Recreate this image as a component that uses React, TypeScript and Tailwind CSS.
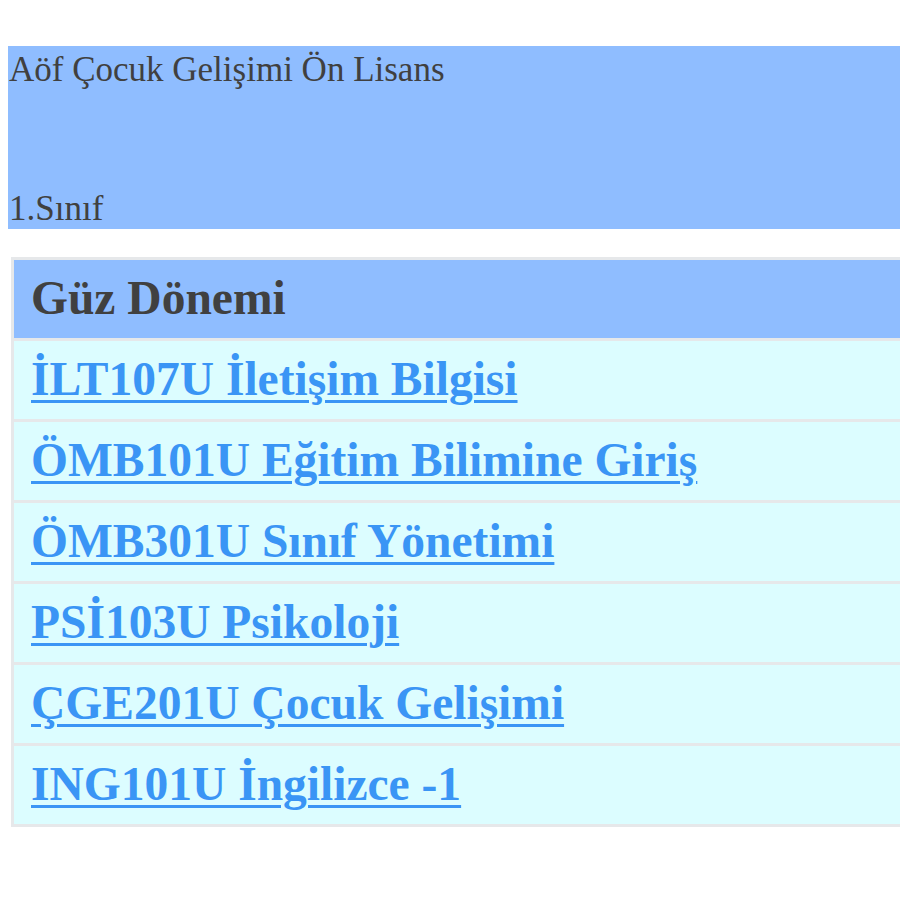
const COURSES = [
  "İLT107U İletişim Bilgisi",
  "ÖMB101U Eğitim Bilimine Giriş",
  "ÖMB301U Sınıf Yönetimi",
  "PSİ103U Psikoloji",
  "ÇGE201U Çocuk Gelişimi",
  "ING101U İngilizce -1",
];

export default function App() {
  return (
    <div className="w-[900px] h-[900px] overflow-hidden bg-white font-['Liberation_Serif',serif]">
      <div className="w-[1100px] pt-[46px] pl-[8px]">
        {/* Program banner */}
        <div className="h-[183px] flex flex-col justify-between bg-[#8fbdff] text-[#404040] text-[35px] leading-[40px]">
          <div className="pl-[1px] pt-[4px]">Aöf Çocuk Gelişimi Ön Lisans</div>
          <div className="pl-[1px]">1.Sınıf</div>
        </div>

        {/* Semester table */}
        <div className="mt-[28px] ml-[3px] flex flex-col gap-[3px] bg-[#e6e8ea] p-[3px]">
          <div className="h-[78px] flex items-center px-[17px] bg-[#8fbdff] text-[#404040] text-[47.5px] font-bold">
            Güz Dönemi
          </div>
          {COURSES.map((c) => (
            <div key={c} className="h-[78px] flex items-center px-[17px] bg-[#dcfdff]">
              <a
                href="#"
                className="text-[#3a95f5] text-[47.5px] font-bold underline decoration-[3px] underline-offset-[5px]"
              >
                {c}
              </a>
            </div>
          ))}
        </div>
      </div>
    </div>
  );
}
